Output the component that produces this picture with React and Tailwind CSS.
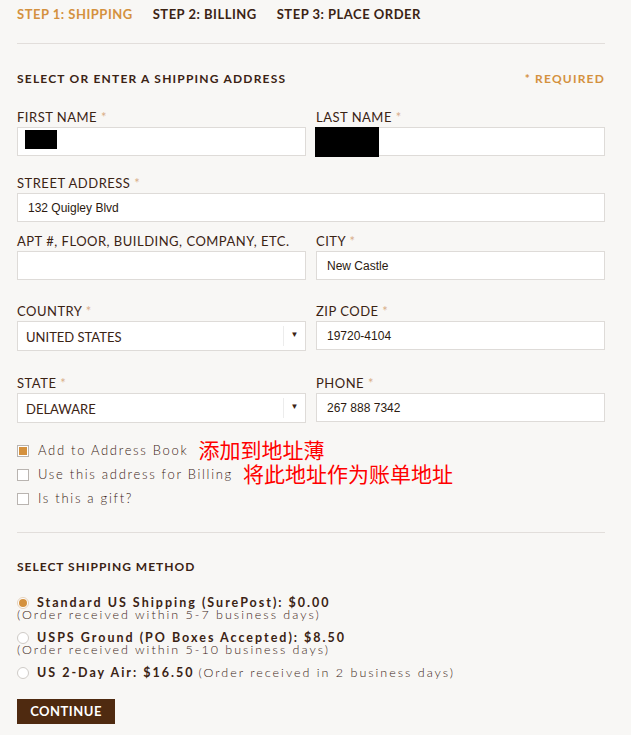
import { useState } from "react";

const brown = "text-[#3b2314]";

const Label = ({ children, required }) => (
  <div className={`text-[13px] leading-4 tracking-[0.5px] ${brown} mb-[2px] uppercase`}>
    {children}
    {required && <span className="text-[#d9ae8a]"> *</span>}
  </div>
);

const TextInput = ({ value, children }) => (
  <div className="relative h-[29px] bg-white border border-[#dedbd8] flex items-center px-[10px] text-[12px] text-[#2b1a10] font-['Liberation_Sans',Arial,sans-serif]">
    {value}
    {children}
  </div>
);

const SelectInput = ({ value }) => (
  <div className="h-[30px] bg-white border border-[#dedbd8] flex items-center pl-[8px] text-[13px] text-[#3b2314]">
    <span className="flex-1 pt-[4px]">{value}</span>
    <span className="w-px h-[20px] bg-[#ececec]" />
    <span className="w-[21px] flex justify-center text-[8px] text-[#3b2314] -mt-[4px]">▼</span>
  </div>
);

const Checkbox = ({ checked, label, note }) => (
  <div className="flex items-center h-[24px]">
    <span className="w-[12px] h-[12px] border border-[#b9b4b0] bg-white flex items-center justify-center">
      {checked && <span className="w-[8px] h-[8px] bg-[#d4913e]" />}
    </span>
    <span className={`ml-[9px] text-[13px] tracking-[1.7px] ${brown} font-light`}>{label}</span>
    {note && (
      <span className="ml-[10px] -mt-[3px] text-[21px] text-[#ff0000] font-['Noto_Sans_CJK_SC',sans-serif] leading-[21px]">
        {note}
      </span>
    )}
  </div>
);

const Radio = ({ checked, title, desc, inline }) => (
  <div className="text-[12.5px] tracking-[2px] leading-[12px] text-[#3b2314]">
    <div className="flex items-center">
      <span
        className={`w-[12px] h-[12px] rounded-full border flex items-center justify-center ${
          checked ? "border-[#e6d2bb] bg-white" : "border-[#cfcbc7] bg-white"
        }`}
      >
        {checked && <span className="w-[8px] h-[8px] rounded-full bg-[#d4913e]" />}
      </span>
      <span className="ml-[8px] font-bold">{title}</span>
      {inline && <span className="ml-[4px] font-light">{inline}</span>}
    </div>
    {desc && <div className="font-light">{desc}</div>}
  </div>
);

export default function App() {
  const [method] = useState("standard");

  return (
    <div className="min-h-[735px] bg-[#f8f7f5] font-['Lato',sans-serif] pl-[17px] pr-[26px]">
      {/* Pasos del checkout */}
      <div className="flex gap-[20px] pt-[6px] text-[13px] font-bold tracking-[0.5px] leading-4">
        <span className="text-[#d4913e]">STEP 1: SHIPPING</span>
        <span className={brown}>STEP 2: BILLING</span>
        <span className={brown}>STEP 3: PLACE ORDER</span>
      </div>
      <div className="mt-[21px] h-px bg-[#e2dedb]" />

      <div className="flex justify-between mt-[27px] text-[12px] font-bold tracking-[1.2px] leading-4">
        <span className={brown}>SELECT OR ENTER A SHIPPING ADDRESS</span>
        <span className="text-[#d4913e]">* REQUIRED</span>
      </div>

      <div className="grid grid-cols-2 gap-x-[10px] mt-[22px]">
        <div>
          <Label required>First name</Label>
          <TextInput>
            <span className="absolute left-[7px] top-[2px] w-[32px] h-[19px] bg-black" />
          </TextInput>
        </div>
        <div>
          <Label required>Last name</Label>
          <TextInput>
            <span className="absolute -left-[2px] -top-px w-[64px] h-[30px] bg-black" />
          </TextInput>
        </div>
      </div>

      <div className="mt-[19px]">
        <Label required>Street address</Label>
        <TextInput value="132 Quigley Blvd" />
      </div>

      <div className="grid grid-cols-2 gap-x-[10px] mt-[11px]">
        <div>
          <Label>Apt #, floor, building, company, etc.</Label>
          <TextInput />
        </div>
        <div>
          <Label required>City</Label>
          <TextInput value="New Castle" />
        </div>
      </div>

      <div className="grid grid-cols-2 gap-x-[10px] mt-[23px]">
        <div>
          <Label required>Country</Label>
          <SelectInput value="UNITED STATES" />
        </div>
        <div>
          <Label required>Zip code</Label>
          <TextInput value="19720-4104" />
        </div>
      </div>

      <div className="grid grid-cols-2 gap-x-[10px] mt-[24px]">
        <div>
          <Label required>State</Label>
          <SelectInput value="DELAWARE" />
        </div>
        <div>
          <Label required>Phone</Label>
          <TextInput value="267 888 7342" />
        </div>
      </div>

      <div className="mt-[16px]">
        <Checkbox checked label="Add to Address Book" note="添加到地址薄" />
        <Checkbox label="Use this address for Billing" note="将此地址作为账单地址" />
        <Checkbox label="Is this a gift?" />
      </div>

      <div className="mt-[21px] h-px bg-[#e2dedb]" />

      <div className={`mt-[26px] text-[12px] font-bold tracking-[1px] leading-4 ${brown}`}>
        SELECT SHIPPING METHOD
      </div>

      <div className="mt-[22px] flex flex-col gap-[11px]">
        <Radio
          checked={method === "standard"}
          title="Standard US Shipping (SurePost): $0.00"
          desc="(Order received within 5-7 business days)"
        />
        <Radio
          checked={method === "ground"}
          title="USPS Ground (PO Boxes Accepted): $8.50"
          desc="(Order received within 5-10 business days)"
        />
        <Radio
          checked={method === "air"}
          title="US 2-Day Air: $16.50"
          inline="(Order received in 2 business days)"
        />
      </div>

      <button className="mt-[20px] w-[98px] h-[25px] bg-[#4f2a10] text-white text-[13px] font-bold tracking-[0.5px]">
        CONTINUE
      </button>
    </div>
  );
}
